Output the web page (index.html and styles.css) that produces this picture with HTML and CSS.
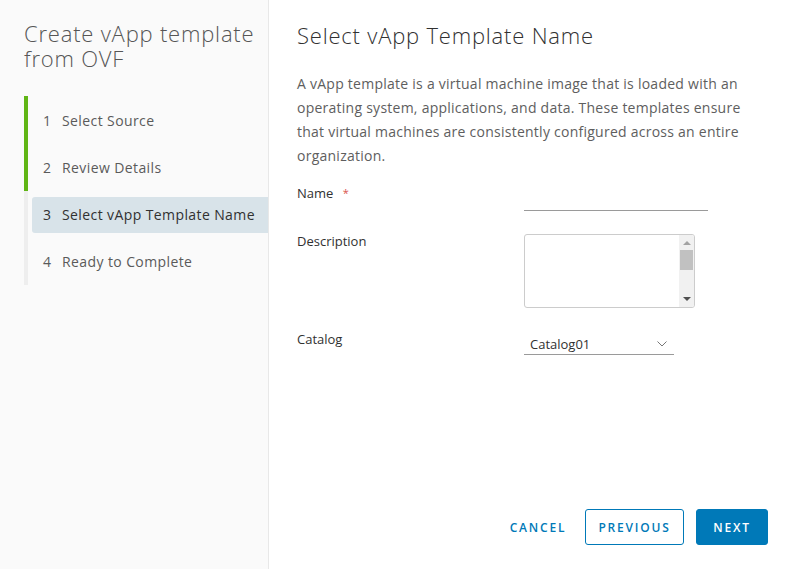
FILE: index.html
```html
<!DOCTYPE html>
<html>
<head>
<meta charset="utf-8">
<link rel="stylesheet" href="styles.css">
</head>
<body>
<div class="modal">
  <aside class="sidebar">
    <h1 class="side-title">Create vApp template from OVF</h1>
    <ol class="steps">
      <li class="step done"><span class="step-link"><span class="num">1</span>Select Source</span></li>
      <li class="step done"><span class="step-link"><span class="num">2</span>Review Details</span></li>
      <li class="step current"><span class="step-link"><span class="num">3</span>Select vApp Template Name</span></li>
      <li class="step"><span class="step-link"><span class="num">4</span>Ready to Complete</span></li>
    </ol>
  </aside>
  <main class="content">
    <h2 class="page-title">Select vApp Template Name</h2>
    <p class="intro">A vApp template is a virtual machine image that is loaded with an operating system, applications, and data. These templates ensure that virtual machines are consistently configured across an entire organization.</p>
    <div class="form">
      <div class="row row-name">
        <label class="label">Name <span class="req">*</span></label>
        <div class="control"><input class="text-input" type="text"></div>
      </div>
      <div class="row row-desc">
        <label class="label">Description</label>
        <div class="control">
          <div class="textarea-box">
            <textarea class="textarea"></textarea>
            <div class="scrollbar">
              <span class="arrow up"></span>
              <span class="thumb"></span>
              <span class="track"></span>
              <span class="arrow down"></span>
            </div>
          </div>
        </div>
      </div>
      <div class="row row-cat">
        <label class="label">Catalog</label>
        <div class="control">
          <div class="select">
            <span class="select-value">Catalog01</span>
            <svg class="chev" width="10" height="6" viewBox="0 0 10 6"><path d="M0.5 0.5 L5 5 L9.5 0.5" fill="none" stroke="#777" stroke-width="1"/></svg>
          </div>
        </div>
      </div>
    </div>
    <div class="footer">
      <button class="btn btn-link">CANCEL</button>
      <button class="btn btn-outline">PREVIOUS</button>
      <button class="btn btn-primary">NEXT</button>
    </div>
  </main>
</div>
</body>
</html>
```
FILE: styles.css
```css
* { box-sizing: border-box; }
html, body { margin: 0; padding: 0; }
body {
  width: 792px;
  height: 569px;
  background: #ffffff;
  font-family: "Open Sans", Lato, sans-serif;
  color: #565656;
  overflow: hidden;
}
.modal {
  display: flex;
  width: 792px;
  height: 569px;
}
.sidebar {
  width: 269px;
  flex: none;
  background: #fafafa;
  border-right: 1px solid #e8e8e8;
  padding: 21px 0 0 24px;
}
.side-title {
  margin: 0;
  font-size: 22px;
  font-weight: 300;
  letter-spacing: 0.8px;
  line-height: 25px;
  color: #565656;
  width: 240px;
}
.steps {
  list-style: none;
  margin: 25px 0 0 0;
  padding: 0;
}
.step {
  height: 47.25px;
  border-left: 4px solid #eeeeee;
  padding: 6px 0 5px 4px;
}
.step.done { border-left-color: #60b515; }
.step-link {
  display: flex;
  align-items: center;
  height: 36px;
  padding-left: 11px;
  font-size: 14px;
  letter-spacing: 0.4px;
  color: #5a5a5a;
  border-radius: 3px 0 0 3px;
}
.step.current .step-link {
  background: #d8e3e9;
  color: #313131;
}
.num { width: 19px; }
.content {
  flex: 1;
  display: flex;
  flex-direction: column;
  padding: 20px 24px 24px 28px;
}
.page-title {
  margin: 0;
  font-size: 22px;
  font-weight: 300;
  letter-spacing: 0.8px;
  line-height: 30px;
  color: #313131;
}
.intro {
  margin: 22px 0 0 0;
  font-size: 14px;
  letter-spacing: 0.25px;
  line-height: 24px;
  color: #5e5e5e;
  width: 460px;
}
.form { margin-top: 16px; }
.row { display: flex; }
.label {
  width: 227px;
  flex: none;
  font-size: 13px;
  line-height: 18px;
  color: #313131;
}
.req { color: #d9534f; margin-left: 6px; font-size: 11px; vertical-align: top; }
.row-name { height: 40px; }
.row-desc { height: 98px; margin-top: 8px; }
.text-input {
  width: 184px;
  height: 24px;
  margin-top: 3px;
  border: none;
  border-bottom: 1px solid #9a9a9a;
  background: transparent;
  outline: none;
  font: inherit;
}
.textarea-box {
  width: 171px;
  height: 74px;
  margin-top: 2px;
  border: 1px solid #cccccc;
  border-radius: 3px;
  display: flex;
  overflow: hidden;
  background: #fff;
}
.textarea {
  flex: 1;
  border: none;
  outline: none;
  resize: none;
  background: transparent;
}
.scrollbar {
  width: 15px;
  flex: none;
  background: #f1f1f1;
  display: flex;
  flex-direction: column;
  align-items: center;
}
.arrow {
  width: 0; height: 0;
  border-left: 4px solid transparent;
  border-right: 4px solid transparent;
}
.arrow.up { border-bottom: 4px solid #a3a3a3; margin-top: 6px; }
.arrow.down { border-top: 4px solid #505050; margin-bottom: 6px; }
.thumb {
  width: 13px;
  height: 20px;
  background: #c1c1c1;
  margin-top: 5px;
}
.track { flex: 1; }
.select {
  width: 150px;
  height: 25px;
  margin-top: 0;
  border-bottom: 1px solid #9a9a9a;
  display: flex;
  align-items: center;
  justify-content: space-between;
  padding: 3px 7px 0 6px;
  font-size: 13px;
  color: #313131;
}
.footer {
  margin-top: auto;
  display: flex;
  justify-content: flex-end;
  align-items: center;
  gap: 12px;
}
.btn {
  height: 36px;
  font-family: inherit;
  font-size: 12px;
  font-weight: 600;
  letter-spacing: 1.8px;
  border-radius: 3px;
  cursor: pointer;
  padding: 0;
}
.btn-link {
  background: transparent;
  border: 1px solid transparent;
  color: #0079b8;
  width: 78px;
  margin-right: -4px;
}
.btn-outline {
  background: #fff;
  border: 1px solid #0079b8;
  color: #0079b8;
  width: 99px;
}
.btn-primary {
  background: #0079b8;
  border: 1px solid #0079b8;
  color: #fff;
  width: 72px;
}
```
